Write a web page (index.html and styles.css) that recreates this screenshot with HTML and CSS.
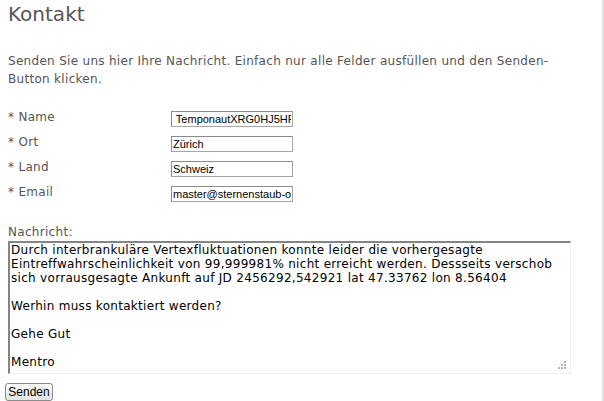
FILE: index.html
```html
<!DOCTYPE html>
<html lang="de">
<head>
    <meta charset="UTF-8">
    <meta name="viewport" content="width=device-width, initial-scale=1.0">
    <title>Kontakt</title>
    <link rel="stylesheet" href="styles.css">
</head>
<body>
    <div class="page">
        <h1>Kontakt</h1>
        <p class="intro">Senden Sie uns hier Ihre Nachricht. Einfach nur alle Felder ausfüllen und den Senden-Button klicken.</p>
        <form id="contactForm">
            <div class="row">
                <label for="name">* Name</label>
                <input type="text" id="name" value=" TemponautXRG0HJ5HF">
            </div>
            <div class="row">
                <label for="ort">* Ort</label>
                <input type="text" id="ort" value="Zürich">
            </div>
            <div class="row">
                <label for="land">* Land</label>
                <input type="text" id="land" value="Schweiz">
            </div>
            <div class="row">
                <label for="email">* Email</label>
                <input type="text" id="email" value="master@sternenstaub-online.ch">
            </div>
            <label class="msg-label" for="message">Nachricht:</label>
            <div class="msg-box">
                <textarea id="message">Durch interbrankuläre Vertexfluktuationen konnte leider die vorhergesagte Eintreffwahrscheinlichkeit von 99,999981% nicht erreicht werden. Dessseits verschob sich vorrausgesagte Ankunft auf JD 2456292,542921 lat 47.33762 lon 8.56404

Werhin muss kontaktiert werden?

Gehe Gut

Mentro</textarea>
                <span class="grip"></span>
            </div>
            <button type="submit">Senden</button>
        </form>
    </div>
</body>
</html>
```

FILE: styles.css
```css
/* Page */
body {
    margin: 0;
    background: white;
    font-family: "DejaVu Sans", Verdana, sans-serif;
    font-size: 12px;
    letter-spacing: 0.3px;
    color: #555;
}

.page {
    width: 594px;
    height: 401px;
    padding: 2px 0 0 8px;
    border-right: 2px solid #e2e2e2;
    box-sizing: content-box;
    overflow: hidden;
}

/* Heading */
h1 {
    margin: 0;
    font-size: 20px;
    font-weight: normal;
    letter-spacing: 0;
    line-height: 24px;
    color: #555;
}

/* Intro text */
.intro {
    width: 556px;
    margin: 26px 0 16px 0;
    line-height: 18px;
}

/* Form rows */
.row {
    display: flex;
    align-items: flex-start;
    height: 25px;
}

.row label {
    width: 163px;
    line-height: 26px;
}

.row input {
    width: 122px;
    height: 16px;
    margin-top: 7px;
    padding: 0 1px;
    box-sizing: border-box;
    border: 1px solid #a5a5a5;
    border-top-color: #8c8c8c;
    border-left-color: #8c8c8c;
    font-family: "Liberation Sans", Arial, sans-serif;
    font-size: 11px;
    letter-spacing: 0;
    color: #000;
    outline: none;
}

/* Message */
.msg-label {
    display: block;
    margin-top: 21px;
    line-height: 15px;
}

.msg-box {
    position: relative;
    width: 563px;
    margin-top: 1px;
}

textarea {
    display: block;
    width: 563px;
    height: 133px;
    margin: 0;
    padding: 0 1px;
    box-sizing: border-box;
    border-style: solid;
    border-width: 2px 1px 1px 2px;
    border-color: #858585 #f0f0f0 #f0f0f0 #858585;
    font-family: "DejaVu Sans", Verdana, sans-serif;
    font-size: 12px;
    letter-spacing: 0.3px;
    line-height: 14px;
    color: #000;
    overflow: hidden;
    resize: none;
    outline: none;
}

/* Resize grip drawn as a dot triangle */
.grip {
    position: absolute;
    right: 4px;
    bottom: 4px;
    width: 9px;
    height: 9px;
    background:
        linear-gradient(#b4b4b4, #b4b4b4) 6px 0 / 2px 2px no-repeat,
        linear-gradient(#b4b4b4, #b4b4b4) 3px 3px / 2px 2px no-repeat,
        linear-gradient(#b4b4b4, #b4b4b4) 6px 3px / 2px 2px no-repeat,
        linear-gradient(#b4b4b4, #b4b4b4) 0 6px / 2px 2px no-repeat,
        linear-gradient(#b4b4b4, #b4b4b4) 3px 6px / 2px 2px no-repeat,
        linear-gradient(#b4b4b4, #b4b4b4) 6px 6px / 2px 2px no-repeat;
}

/* Submit button */
button {
    display: block;
    margin: 9px 0 0 -3px;
    width: 48px;
    height: 18px;
    padding: 0;
    border: 1px solid #8a8a8a;
    border-radius: 3px;
    background: linear-gradient(#fafafa, #e4e4e4);
    font-family: "Liberation Sans", Arial, sans-serif;
    font-size: 12px;
    letter-spacing: 0;
    color: #000;
    cursor: pointer;
}
```
